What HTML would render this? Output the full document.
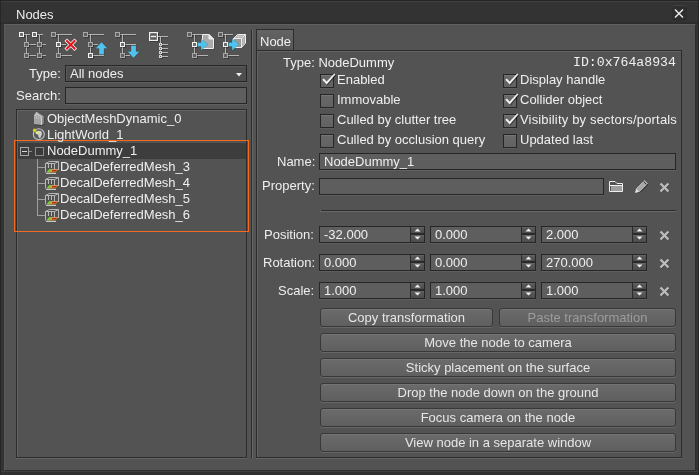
<!DOCTYPE html>
<html><head><meta charset="utf-8">
<style>
*{box-sizing:border-box;margin:0;padding:0}
html,body{width:699px;height:475px;overflow:hidden;background:#262626}
body{position:relative;font-family:"Liberation Sans",sans-serif;font-size:13px;color:#efefef}
.a{position:absolute}
.t{position:absolute;line-height:15px;white-space:pre;will-change:transform}
#win{left:0;top:0;width:699px;height:475px;background:#333;border:1px solid #262626;border-top-color:#242424;border-radius:3px 3px 0 0;box-shadow:inset 0 1px 0 #3e3e3e}
#title{left:1px;top:1px;width:697px;height:23px;background:#333;border-top:1px solid #3f3f3f;border-bottom:2px solid #2d2d2d}
#panel{left:4px;top:24px;width:692px;height:447px;background:#535353;border-top:1px solid #606060;border-left:1px solid #5a5a5a;border-right:1px solid #2c2c2c;border-bottom:1px solid #2c2c2c}
.frame{position:absolute;border:1px solid #2c2c2c;box-shadow:inset 1px 1px 0 #646464,0 1px 0 #646464}
.field{position:absolute;border:1px solid #262626;background:#5e5e5e;box-shadow:0 1px 0 #606060}
.cb{position:absolute;width:14px;height:14px;border:1px solid #262626;background:linear-gradient(#686868,#626262);box-shadow:inset 0 1px 0 #767676,0 1px 0 #5c5c5c}
.btn{position:absolute;border:1px solid #383838;border-radius:3px;background:linear-gradient(#6b6b6b,#5f5f5f);box-shadow:inset 0 1px 0 #747474,0 1px 0 #676767;text-align:center;line-height:17px;color:#e6e6e6}
.spin{position:absolute;width:106px;height:17px;border:1px solid #262626;background:#5e5e5e;box-shadow:0 1px 0 #5e5e5e}
.spin .up,.spin .dn{position:absolute;left:90px;width:14px;background:linear-gradient(#5c5c5c,#4c4c4c);border-left:1px solid #2a2a2a;box-shadow:inset 0 1px 0 #626262}
.spin .up{top:0;height:8px;border-bottom:2px solid #2a2a2a}
.spin .dn{top:8px;height:7px}
.spin span{position:absolute;left:4px;top:0px;line-height:15px;will-change:transform}
.xic{position:absolute}
</style></head><body>
<div id="win" class="a"></div>
<div id="title" class="a"></div>
<div class="t" style="left:16px;top:7px;color:#ececec">Nodes</div>
<!-- close button -->
<div class="a" style="left:672px;top:5px;width:15px;height:16px;border-radius:3px;background:#2e2e2e;box-shadow:inset 0 1px 0 #404040"></div>
<svg class="a" style="left:672px;top:5px" width="15" height="16"><path d="M3 4.5 L11 12.5 M11 4.5 L3 12.5" stroke="#e8e8e8" stroke-width="1.5"/></svg>

<div id="panel" class="a"></div>
<div id="bot" class="a" style="left:1px;top:471px;width:697px;height:4px;background:#303030;border-top:1px solid #3f3f3f"></div>

<!-- left panel -->
<div class="t" style="left:29px;top:66px">Type:</div>
<div class="a" style="left:65px;top:65px;width:182px;height:17px;border:1px solid #262626;background:#4d4d4d;box-shadow:inset 1px 1px 0 #5a5a5a,0 1px 0 #5e5e5e"></div>
<div class="t" style="left:70px;top:66px">All nodes</div>
<svg class="a" style="left:236px;top:73px" width="6" height="4"><path d="M0 0 H6 L3 3.5 Z" fill="#f0f0f0"/></svg>
<div class="t" style="left:16px;top:88px">Search:</div>
<div class="field" style="left:65px;top:87px;width:182px;height:17px"></div>

<div class="frame" style="left:16px;top:109px;width:231px;height:349px"></div>
<!-- selection row -->
<div class="a" style="left:18px;top:143px;width:228px;height:16px;background:#3d3d3d"></div>
<div class="a" style="left:14px;top:140px;width:235px;height:92px;border:1px solid #f46a20"></div>

<div class="t" style="left:47px;top:111px">ObjectMeshDynamic_0</div>
<div class="t" style="left:47px;top:127px">LightWorld_1</div>
<div class="t" style="left:47px;top:143px">NodeDummy_1</div>
<div class="t" style="left:60px;top:159px">DecalDeferredMesh_3</div>
<div class="t" style="left:60px;top:175px">DecalDeferredMesh_4</div>
<div class="t" style="left:60px;top:191px">DecalDeferredMesh_5</div>
<div class="t" style="left:60px;top:207px">DecalDeferredMesh_6</div>

<!-- splitter -->
<div class="a" style="left:251px;top:30px;width:1px;height:428px;background:#2e2e2e"></div>
<div class="a" style="left:252px;top:30px;width:1px;height:428px;background:#666"></div>

<!-- right panel -->
<div class="a" style="left:256px;top:29px;width:38px;height:22px;border:1px solid #2c2c2c;border-bottom:none;background:linear-gradient(#646464,#555)"></div>
<div class="t" style="left:260px;top:34px">Node</div>
<div class="frame" style="left:256px;top:50px;width:426px;height:408px"></div>

<div class="t" style="left:283px;top:55px">Type: NodeDummy</div>
<div class="t" style="left:573px;top:55px;font-family:'Liberation Mono',monospace;font-size:13.2px">ID:0x764a8934</div>

<div class="cb" style="left:320px;top:74px"></div>
<div class="cb" style="left:320px;top:94px"></div>
<div class="cb" style="left:320px;top:114px"></div>
<div class="cb" style="left:320px;top:134px"></div>
<div class="t" style="left:337px;top:72px">Enabled</div>
<div class="t" style="left:337px;top:92px">Immovable</div>
<div class="t" style="left:337px;top:112px">Culled by clutter tree</div>
<div class="t" style="left:337px;top:132px">Culled by occlusion query</div>
<div class="cb" style="left:503px;top:74px"></div>
<div class="cb" style="left:503px;top:94px"></div>
<div class="cb" style="left:503px;top:114px"></div>
<div class="cb" style="left:503px;top:134px"></div>
<div class="t" style="left:520px;top:72px">Display handle</div>
<div class="t" style="left:520px;top:92px">Collider object</div>
<div class="t" style="left:520px;top:112px;letter-spacing:0.165px">Visibility by sectors/portals</div>
<div class="t" style="left:520px;top:132px">Updated last</div>

<div class="t" style="left:277px;top:154px">Name:</div>
<div class="field" style="left:319px;top:153px;width:357px;height:17px"></div>
<div class="t" style="left:324px;top:154px">NodeDummy_1</div>
<div class="t" style="left:262px;top:178px">Property:</div>
<div class="field" style="left:319px;top:178px;width:285px;height:17px"></div>
<div class="a" style="left:320px;top:210px;width:356px;height:1px;background:#2c2c2c;border-left:1px solid #686868;box-shadow:0 1px 0 #686868"></div>

<div class="t" style="left:264px;top:227px">Position:</div>
<div class="t" style="left:263px;top:255px">Rotation:</div>
<div class="t" style="left:278px;top:283px">Scale:</div>

<div class="spin" style="left:319px;top:226px"><span>-32.000</span><div class="up"></div><div class="dn"></div></div>
<div class="spin" style="left:430px;top:226px"><span>0.000</span><div class="up"></div><div class="dn"></div></div>
<div class="spin" style="left:541px;top:226px"><span>2.000</span><div class="up"></div><div class="dn"></div></div>
<div class="spin" style="left:319px;top:254px"><span>0.000</span><div class="up"></div><div class="dn"></div></div>
<div class="spin" style="left:430px;top:254px"><span>0.000</span><div class="up"></div><div class="dn"></div></div>
<div class="spin" style="left:541px;top:254px"><span>270.000</span><div class="up"></div><div class="dn"></div></div>
<div class="spin" style="left:319px;top:282px"><span>1.000</span><div class="up"></div><div class="dn"></div></div>
<div class="spin" style="left:430px;top:282px"><span>1.000</span><div class="up"></div><div class="dn"></div></div>
<div class="spin" style="left:541px;top:282px"><span>1.000</span><div class="up"></div><div class="dn"></div></div>

<div class="btn" style="left:320px;top:308px;width:173px;height:19px">Copy transformation</div>
<div class="btn" style="left:499px;top:308px;width:177px;height:19px;color:#9c9c9c">Paste transformation</div>
<div class="btn" style="left:320px;top:333px;width:356px;height:19px">Move the node to camera</div>
<div class="btn" style="left:320px;top:358px;width:356px;height:19px">Sticky placement on the surface</div>
<div class="btn" style="left:320px;top:383px;width:356px;height:19px">Drop the node down on the ground</div>
<div class="btn" style="left:320px;top:408px;width:356px;height:19px">Focus camera on the node</div>
<div class="btn" style="left:320px;top:433px;width:356px;height:19px">View node in a separate window</div>

<!--ICONS-->
<svg class="a" style="left:0;top:0" width="699" height="475">
<rect shape-rendering="crispEdges" x="24" y="35" width="6" height="1" fill="rgba(0,0,0,0.18)"/>
<rect shape-rendering="crispEdges" x="24" y="34" width="6" height="1" fill="#b4b4b4"/>
<rect shape-rendering="crispEdges" x="27" y="35" width="1" height="18" fill="rgba(0,0,0,0.18)"/>
<rect shape-rendering="crispEdges" x="26" y="35" width="1" height="18" fill="#b4b4b4"/>
<rect shape-rendering="crispEdges" x="29" y="45" width="7" height="1" fill="rgba(0,0,0,0.18)"/>
<rect shape-rendering="crispEdges" x="29" y="44" width="7" height="1" fill="#b4b4b4"/>
<rect shape-rendering="crispEdges" x="29" y="56" width="7" height="1" fill="rgba(0,0,0,0.18)"/>
<rect shape-rendering="crispEdges" x="29" y="55" width="7" height="1" fill="#b4b4b4"/>
<rect shape-rendering="crispEdges" x="20" y="33" width="5" height="5" fill="rgba(0,0,0,0.28)"/>
<rect shape-rendering="crispEdges" x="19.5" y="32.5" width="4" height="4" fill="#6e6e6e" stroke="#f2f2f2" stroke-width="1"/>
<rect shape-rendering="crispEdges" x="25" y="43" width="5" height="5" fill="rgba(0,0,0,0.28)"/>
<rect shape-rendering="crispEdges" x="24.5" y="42.5" width="4" height="4" fill="#5e5e5e" stroke="#a8a8a8" stroke-width="1"/>
<rect shape-rendering="crispEdges" x="25" y="54" width="5" height="5" fill="rgba(0,0,0,0.28)"/>
<rect shape-rendering="crispEdges" x="24.5" y="53.5" width="4" height="4" fill="#5e5e5e" stroke="#a8a8a8" stroke-width="1"/>
<rect shape-rendering="crispEdges" x="37" y="35" width="6" height="1" fill="rgba(0,0,0,0.18)"/>
<rect shape-rendering="crispEdges" x="37" y="34" width="6" height="1" fill="#b4b4b4"/>
<rect shape-rendering="crispEdges" x="40" y="35" width="1" height="18" fill="rgba(0,0,0,0.18)"/>
<rect shape-rendering="crispEdges" x="39" y="35" width="1" height="18" fill="#b4b4b4"/>
<rect shape-rendering="crispEdges" x="42" y="45" width="4" height="1" fill="rgba(0,0,0,0.18)"/>
<rect shape-rendering="crispEdges" x="42" y="44" width="4" height="1" fill="#b4b4b4"/>
<rect shape-rendering="crispEdges" x="42" y="56" width="4" height="1" fill="rgba(0,0,0,0.18)"/>
<rect shape-rendering="crispEdges" x="42" y="55" width="4" height="1" fill="#b4b4b4"/>
<rect shape-rendering="crispEdges" x="33" y="33" width="5" height="5" fill="rgba(0,0,0,0.28)"/>
<rect shape-rendering="crispEdges" x="32.5" y="32.5" width="4" height="4" fill="#6e6e6e" stroke="#f2f2f2" stroke-width="1"/>
<rect shape-rendering="crispEdges" x="38" y="43" width="5" height="5" fill="rgba(0,0,0,0.28)"/>
<rect shape-rendering="crispEdges" x="37.5" y="42.5" width="4" height="4" fill="#5e5e5e" stroke="#a8a8a8" stroke-width="1"/>
<rect shape-rendering="crispEdges" x="38" y="54" width="5" height="5" fill="rgba(0,0,0,0.28)"/>
<rect shape-rendering="crispEdges" x="37.5" y="53.5" width="4" height="4" fill="#5e5e5e" stroke="#a8a8a8" stroke-width="1"/>
<rect shape-rendering="crispEdges" x="56" y="35" width="16" height="1" fill="rgba(0,0,0,0.18)"/>
<rect shape-rendering="crispEdges" x="56" y="34" width="16" height="1" fill="#b4b4b4"/>
<rect shape-rendering="crispEdges" x="59" y="35" width="1" height="18" fill="rgba(0,0,0,0.18)"/>
<rect shape-rendering="crispEdges" x="58" y="35" width="1" height="18" fill="#b4b4b4"/>
<rect shape-rendering="crispEdges" x="61" y="45" width="5" height="1" fill="rgba(0,0,0,0.18)"/>
<rect shape-rendering="crispEdges" x="61" y="44" width="5" height="1" fill="#b4b4b4"/>
<rect shape-rendering="crispEdges" x="61" y="56" width="11" height="1" fill="rgba(0,0,0,0.18)"/>
<rect shape-rendering="crispEdges" x="61" y="55" width="11" height="1" fill="#b4b4b4"/>
<rect shape-rendering="crispEdges" x="52" y="33" width="5" height="5" fill="rgba(0,0,0,0.28)"/>
<rect shape-rendering="crispEdges" x="51.5" y="32.5" width="4" height="4" fill="#5e5e5e" stroke="#a8a8a8" stroke-width="1"/>
<rect shape-rendering="crispEdges" x="57" y="43" width="5" height="5" fill="rgba(0,0,0,0.28)"/>
<rect shape-rendering="crispEdges" x="56.5" y="42.5" width="4" height="4" fill="#6e6e6e" stroke="#f2f2f2" stroke-width="1"/>
<rect shape-rendering="crispEdges" x="57" y="54" width="5" height="5" fill="rgba(0,0,0,0.28)"/>
<rect shape-rendering="crispEdges" x="56.5" y="53.5" width="4" height="4" fill="#5e5e5e" stroke="#a8a8a8" stroke-width="1"/>
<rect shape-rendering="crispEdges" x="88" y="35" width="16" height="1" fill="rgba(0,0,0,0.18)"/>
<rect shape-rendering="crispEdges" x="88" y="34" width="16" height="1" fill="#b4b4b4"/>
<rect shape-rendering="crispEdges" x="91" y="35" width="1" height="18" fill="rgba(0,0,0,0.18)"/>
<rect shape-rendering="crispEdges" x="90" y="35" width="1" height="18" fill="#b4b4b4"/>
<rect shape-rendering="crispEdges" x="93" y="45" width="5" height="1" fill="rgba(0,0,0,0.18)"/>
<rect shape-rendering="crispEdges" x="93" y="44" width="5" height="1" fill="#b4b4b4"/>
<rect shape-rendering="crispEdges" x="93" y="56" width="11" height="1" fill="rgba(0,0,0,0.18)"/>
<rect shape-rendering="crispEdges" x="93" y="55" width="11" height="1" fill="#b4b4b4"/>
<rect shape-rendering="crispEdges" x="84" y="33" width="5" height="5" fill="rgba(0,0,0,0.28)"/>
<rect shape-rendering="crispEdges" x="83.5" y="32.5" width="4" height="4" fill="#5e5e5e" stroke="#a8a8a8" stroke-width="1"/>
<rect shape-rendering="crispEdges" x="89" y="43" width="5" height="5" fill="rgba(0,0,0,0.28)"/>
<rect shape-rendering="crispEdges" x="88.5" y="42.5" width="4" height="4" fill="#5e5e5e" stroke="#a8a8a8" stroke-width="1"/>
<rect shape-rendering="crispEdges" x="89" y="54" width="5" height="5" fill="rgba(0,0,0,0.28)"/>
<rect shape-rendering="crispEdges" x="88.5" y="53.5" width="4" height="4" fill="#6e6e6e" stroke="#f2f2f2" stroke-width="1"/>
<rect shape-rendering="crispEdges" x="120" y="35" width="16" height="1" fill="rgba(0,0,0,0.18)"/>
<rect shape-rendering="crispEdges" x="120" y="34" width="16" height="1" fill="#b4b4b4"/>
<rect shape-rendering="crispEdges" x="123" y="35" width="1" height="18" fill="rgba(0,0,0,0.18)"/>
<rect shape-rendering="crispEdges" x="122" y="35" width="1" height="18" fill="#b4b4b4"/>
<rect shape-rendering="crispEdges" x="125" y="45" width="11" height="1" fill="rgba(0,0,0,0.18)"/>
<rect shape-rendering="crispEdges" x="125" y="44" width="11" height="1" fill="#b4b4b4"/>
<rect shape-rendering="crispEdges" x="125" y="56" width="5" height="1" fill="rgba(0,0,0,0.18)"/>
<rect shape-rendering="crispEdges" x="125" y="55" width="5" height="1" fill="#b4b4b4"/>
<rect shape-rendering="crispEdges" x="116" y="33" width="5" height="5" fill="rgba(0,0,0,0.28)"/>
<rect shape-rendering="crispEdges" x="115.5" y="32.5" width="4" height="4" fill="#5e5e5e" stroke="#a8a8a8" stroke-width="1"/>
<rect shape-rendering="crispEdges" x="121" y="43" width="5" height="5" fill="rgba(0,0,0,0.28)"/>
<rect shape-rendering="crispEdges" x="120.5" y="42.5" width="4" height="4" fill="#6e6e6e" stroke="#f2f2f2" stroke-width="1"/>
<rect shape-rendering="crispEdges" x="121" y="54" width="5" height="5" fill="rgba(0,0,0,0.28)"/>
<rect shape-rendering="crispEdges" x="120.5" y="53.5" width="4" height="4" fill="#5e5e5e" stroke="#a8a8a8" stroke-width="1"/>
<path d="M67 41 L74.5 48.5 M74.5 41 L67 48.5" stroke="#f4f4f4" stroke-width="3.6" stroke-linecap="square"/>
<path d="M67 41 L74.5 48.5 M74.5 41 L67 48.5" stroke="#e0141c" stroke-width="2" stroke-linecap="square"/>
<path d="M101.5 42 L107.5 48.5 L104 48.5 L104 54.5 L99 54.5 L99 48.5 L95.5 48.5 Z" fill="#4fc3ee" stroke="rgba(0,0,0,0.25)" stroke-width="0.6"/>
<path d="M133.5 58 L139.5 51.5 L136 51.5 L136 45.5 L131 45.5 L131 51.5 L127.5 51.5 Z" fill="#4fc3ee" stroke="rgba(0,0,0,0.25)" stroke-width="0.6"/>
<rect shape-rendering="crispEdges" x="150" y="33" width="9" height="9" fill="rgba(0,0,0,0.3)"/>
<rect x="149.6" y="32.6" width="7.8" height="7.8" fill="#5c5c5c" stroke="#f0f0f0" stroke-width="1.2"/>
<rect shape-rendering="crispEdges" x="151" y="36" width="5" height="1" fill="#f0f0f0"/>
<rect x="151" y="35.8" width="5" height="1.4" fill="#f0f0f0"/>
<rect shape-rendering="crispEdges" x="158" y="37" width="10" height="1" fill="rgba(0,0,0,0.18)"/>
<rect shape-rendering="crispEdges" x="158" y="36" width="10" height="1" fill="#b4b4b4"/>
<rect shape-rendering="crispEdges" x="161" y="37" width="1" height="20" fill="rgba(0,0,0,0.18)"/>
<rect shape-rendering="crispEdges" x="160" y="37" width="1" height="20" fill="#b4b4b4"/>
<rect shape-rendering="crispEdges" x="160" y="44" width="3" height="3" fill="rgba(0,0,0,0.25)"/>
<rect shape-rendering="crispEdges" x="159" y="43" width="3" height="3" fill="#d4d4d4"/>
<rect shape-rendering="crispEdges" x="160" y="44" width="1" height="1" fill="#5a5a5a"/>
<rect shape-rendering="crispEdges" x="162" y="45" width="6" height="1" fill="rgba(0,0,0,0.18)"/>
<rect shape-rendering="crispEdges" x="162" y="44" width="6" height="1" fill="#b4b4b4"/>
<rect shape-rendering="crispEdges" x="160" y="48" width="3" height="3" fill="rgba(0,0,0,0.25)"/>
<rect shape-rendering="crispEdges" x="159" y="47" width="3" height="3" fill="#d4d4d4"/>
<rect shape-rendering="crispEdges" x="160" y="48" width="1" height="1" fill="#5a5a5a"/>
<rect shape-rendering="crispEdges" x="162" y="49" width="6" height="1" fill="rgba(0,0,0,0.18)"/>
<rect shape-rendering="crispEdges" x="162" y="48" width="6" height="1" fill="#b4b4b4"/>
<rect shape-rendering="crispEdges" x="160" y="52" width="3" height="3" fill="rgba(0,0,0,0.25)"/>
<rect shape-rendering="crispEdges" x="159" y="51" width="3" height="3" fill="#d4d4d4"/>
<rect shape-rendering="crispEdges" x="160" y="52" width="1" height="1" fill="#5a5a5a"/>
<rect shape-rendering="crispEdges" x="162" y="53" width="6" height="1" fill="rgba(0,0,0,0.18)"/>
<rect shape-rendering="crispEdges" x="162" y="52" width="6" height="1" fill="#b4b4b4"/>
<rect shape-rendering="crispEdges" x="160" y="56" width="3" height="3" fill="rgba(0,0,0,0.25)"/>
<rect shape-rendering="crispEdges" x="159" y="55" width="3" height="3" fill="#d4d4d4"/>
<rect shape-rendering="crispEdges" x="160" y="56" width="1" height="1" fill="#5a5a5a"/>
<rect shape-rendering="crispEdges" x="162" y="57" width="6" height="1" fill="rgba(0,0,0,0.18)"/>
<rect shape-rendering="crispEdges" x="162" y="56" width="6" height="1" fill="#b4b4b4"/>
<rect shape-rendering="crispEdges" x="192" y="35" width="10" height="1" fill="rgba(0,0,0,0.18)"/>
<rect shape-rendering="crispEdges" x="192" y="34" width="10" height="1" fill="#b4b4b4"/>
<rect shape-rendering="crispEdges" x="195" y="35" width="1" height="18" fill="rgba(0,0,0,0.18)"/>
<rect shape-rendering="crispEdges" x="194" y="35" width="1" height="18" fill="#b4b4b4"/>
<rect shape-rendering="crispEdges" x="197" y="56" width="11" height="1" fill="rgba(0,0,0,0.18)"/>
<rect shape-rendering="crispEdges" x="197" y="55" width="11" height="1" fill="#b4b4b4"/>
<rect shape-rendering="crispEdges" x="188" y="33" width="5" height="5" fill="rgba(0,0,0,0.28)"/>
<rect shape-rendering="crispEdges" x="187.5" y="32.5" width="4" height="4" fill="#5e5e5e" stroke="#a8a8a8" stroke-width="1"/>
<rect shape-rendering="crispEdges" x="193" y="43" width="5" height="5" fill="rgba(0,0,0,0.28)"/>
<rect shape-rendering="crispEdges" x="192.5" y="42.5" width="4" height="4" fill="#6e6e6e" stroke="#f2f2f2" stroke-width="1"/>
<rect shape-rendering="crispEdges" x="193" y="54" width="5" height="5" fill="rgba(0,0,0,0.28)"/>
<rect shape-rendering="crispEdges" x="192.5" y="53.5" width="4" height="4" fill="#5e5e5e" stroke="#a8a8a8" stroke-width="1"/>
<path d="M203.5 35.5 H210 L214.5 40 V49.5 H203.5 Z" fill="rgba(0,0,0,0.3)"/>
<path d="M202.5 34.5 H209 L213.5 39 V48.5 H202.5 Z" fill="#ababab" stroke="#f0f0f0" stroke-width="1"/>
<path d="M209 34.5 V39 H213.5 Z" fill="#e6e6e6" stroke="#f0f0f0" stroke-width="1"/>
<path d="M197.5 42.5 H201 V38.5 L208 44.5 L201 50.5 V46.5 H197.5 Z" fill="#4fc3ee" stroke="rgba(0,0,0,0.2)" stroke-width="0.6"/>
<rect shape-rendering="crispEdges" x="223" y="35" width="10" height="1" fill="rgba(0,0,0,0.18)"/>
<rect shape-rendering="crispEdges" x="223" y="34" width="10" height="1" fill="#b4b4b4"/>
<rect shape-rendering="crispEdges" x="226" y="35" width="1" height="18" fill="rgba(0,0,0,0.18)"/>
<rect shape-rendering="crispEdges" x="225" y="35" width="1" height="18" fill="#b4b4b4"/>
<rect shape-rendering="crispEdges" x="228" y="56" width="11" height="1" fill="rgba(0,0,0,0.18)"/>
<rect shape-rendering="crispEdges" x="228" y="55" width="11" height="1" fill="#b4b4b4"/>
<rect shape-rendering="crispEdges" x="219" y="33" width="5" height="5" fill="rgba(0,0,0,0.28)"/>
<rect shape-rendering="crispEdges" x="218.5" y="32.5" width="4" height="4" fill="#5e5e5e" stroke="#a8a8a8" stroke-width="1"/>
<rect shape-rendering="crispEdges" x="224" y="43" width="5" height="5" fill="rgba(0,0,0,0.28)"/>
<rect shape-rendering="crispEdges" x="223.5" y="42.5" width="4" height="4" fill="#6e6e6e" stroke="#f2f2f2" stroke-width="1"/>
<rect shape-rendering="crispEdges" x="224" y="54" width="5" height="5" fill="rgba(0,0,0,0.28)"/>
<rect shape-rendering="crispEdges" x="223.5" y="53.5" width="4" height="4" fill="#5e5e5e" stroke="#a8a8a8" stroke-width="1"/>
<path d="M233.5 38.5 L237.5 34.5 H245.5 V43 L241.5 47.5 H233.5 Z" fill="#9a9a9a" stroke="#eeeeee" stroke-width="1"/>
<path d="M233.5 38.5 H241.5 V47.5 M241.5 38.5 L245.5 34.5" fill="none" stroke="#eeeeee" stroke-width="1"/>
<path d="M234.5 37.5 L237.5 35.5 H244 L241 37.5 Z" fill="#cfcfcf"/>
<path d="M242.5 38.5 L244.5 36.5 V43 L242.5 45.5 Z" fill="#bdbdbd"/>
<path d="M228.5 42.5 H232 V38.5 L239 44.5 L232 50.5 V46.5 H228.5 Z" fill="#4fc3ee" stroke="rgba(0,0,0,0.2)" stroke-width="0.6"/>
<path d="M34.5 125 L42 126 L44.5 124.5 V117.5 Z" fill="rgba(0,0,0,0.25)"/>
<path d="M34 115.5 L36.5 112 L43.5 116.5 L43.5 123.5 L41.5 125 L34 124 Z" fill="#a4a4a4"/>
<path d="M34 115.5 L36.5 112 L43.5 116.5 L41.5 118 Z" fill="#cdcdcd"/>
<path d="M35.5 114.5 L41.5 117.8 M37 113 L42.8 116.6" stroke="#8a8a8a" stroke-width="0.7"/>
<path d="M41.5 118 L43.5 116.5 L43.5 123.5 L41.5 125 Z" fill="#8c8c8c"/>
<path d="M41.5 118 V125" stroke="#e0e0e0" stroke-width="0.8"/>
<path d="M34 118 H41" stroke="#d8d8d8" stroke-width="0.8" stroke-dasharray="1 1"/>
<circle cx="38.8" cy="134.2" r="5.5" fill="#5c5c5c" stroke="#c4c4c4" stroke-width="1.1"/>
<path d="M36 131.5 Q39 130 41.5 131.5 L42 134 L40 138.5 L38.5 137 L38 134 L35.5 133.5 Z" fill="#cfcfcf"/>
<circle cx="34.6" cy="130.2" r="1.7" fill="#d8d020"/>
<path d="M35.5 132.5 Q37.5 130.8 39.5 131.8 L38.5 134.5 L36 134 Z" fill="#e0e49a"/>
<rect shape-rendering="crispEdges" x="20.5" y="147.5" width="8" height="8" fill="none" stroke="#a8a8a8"/>
<rect shape-rendering="crispEdges" x="22" y="151" width="5" height="1" fill="#d8d8d8"/>
<rect shape-rendering="crispEdges" x="29" y="151" width="3" height="1" fill="#8a8a8a"/>
<rect shape-rendering="crispEdges" x="35.5" y="147.5" width="8" height="8" fill="#3a3a3a" stroke="#8c8c8c"/>
<rect shape-rendering="crispEdges" x="37" y="159" width="1" height="57" fill="#a0a0a0"/>
<rect shape-rendering="crispEdges" x="38" y="167" width="7" height="1" fill="#a0a0a0"/>
<path d="M45.5 163.5 L49.5 161.5 H58.5 L54.5 163.5 Z M45.5 163.5 V172.5 M54.5 163.5 V169 M58.5 161.5 V170 M48.5 163.5 V168 M51.5 163.5 V168" fill="none" stroke="#b8b8b8" stroke-width="1"/>
<path d="M46.5 172.5 L49.5 169 H58.5 L55.5 172.5 Z" fill="#d89a50"/>
<path d="M46.5 172.5 L49.5 169 H52 L49.5 172.5 Z" fill="#70d030"/>
<path d="M52.5 170 H57 L56 171.5 H51.5 Z" fill="#b02a10"/>
<rect shape-rendering="crispEdges" x="46" y="173" width="10" height="1" fill="#c8c8c8"/>
<rect shape-rendering="crispEdges" x="38" y="183" width="7" height="1" fill="#a0a0a0"/>
<path d="M45.5 179.5 L49.5 177.5 H58.5 L54.5 179.5 Z M45.5 179.5 V188.5 M54.5 179.5 V185 M58.5 177.5 V186 M48.5 179.5 V184 M51.5 179.5 V184" fill="none" stroke="#b8b8b8" stroke-width="1"/>
<path d="M46.5 188.5 L49.5 185 H58.5 L55.5 188.5 Z" fill="#d89a50"/>
<path d="M46.5 188.5 L49.5 185 H52 L49.5 188.5 Z" fill="#70d030"/>
<path d="M52.5 186 H57 L56 187.5 H51.5 Z" fill="#b02a10"/>
<rect shape-rendering="crispEdges" x="46" y="189" width="10" height="1" fill="#c8c8c8"/>
<rect shape-rendering="crispEdges" x="38" y="199" width="7" height="1" fill="#a0a0a0"/>
<path d="M45.5 195.5 L49.5 193.5 H58.5 L54.5 195.5 Z M45.5 195.5 V204.5 M54.5 195.5 V201 M58.5 193.5 V202 M48.5 195.5 V200 M51.5 195.5 V200" fill="none" stroke="#b8b8b8" stroke-width="1"/>
<path d="M46.5 204.5 L49.5 201 H58.5 L55.5 204.5 Z" fill="#d89a50"/>
<path d="M46.5 204.5 L49.5 201 H52 L49.5 204.5 Z" fill="#70d030"/>
<path d="M52.5 202 H57 L56 203.5 H51.5 Z" fill="#b02a10"/>
<rect shape-rendering="crispEdges" x="46" y="205" width="10" height="1" fill="#c8c8c8"/>
<rect shape-rendering="crispEdges" x="38" y="215" width="7" height="1" fill="#a0a0a0"/>
<path d="M45.5 211.5 L49.5 209.5 H58.5 L54.5 211.5 Z M45.5 211.5 V220.5 M54.5 211.5 V217 M58.5 209.5 V218 M48.5 211.5 V216 M51.5 211.5 V216" fill="none" stroke="#b8b8b8" stroke-width="1"/>
<path d="M46.5 220.5 L49.5 217 H58.5 L55.5 220.5 Z" fill="#d89a50"/>
<path d="M46.5 220.5 L49.5 217 H52 L49.5 220.5 Z" fill="#70d030"/>
<path d="M52.5 218 H57 L56 219.5 H51.5 Z" fill="#b02a10"/>
<rect shape-rendering="crispEdges" x="46" y="221" width="10" height="1" fill="#c8c8c8"/>
<path d="M323.20 80.70 L324.80 79.40 L327.50 82.30 L335.20 74.50 L336.20 75.50 L327.60 85.50 Z" fill="rgba(0,0,0,0.4)"/>
<path d="M322.30 79.80 L323.90 78.50 L326.60 81.40 L334.30 73.60 L335.30 74.60 L326.70 84.60 Z" fill="#f2f2f2"/>
<path d="M506.20 80.70 L507.80 79.40 L510.50 82.30 L518.20 74.50 L519.20 75.50 L510.60 85.50 Z" fill="rgba(0,0,0,0.4)"/>
<path d="M505.30 79.80 L506.90 78.50 L509.60 81.40 L517.30 73.60 L518.30 74.60 L509.70 84.60 Z" fill="#f2f2f2"/>
<path d="M506.20 100.70 L507.80 99.40 L510.50 102.30 L518.20 94.50 L519.20 95.50 L510.60 105.50 Z" fill="rgba(0,0,0,0.4)"/>
<path d="M505.30 99.80 L506.90 98.50 L509.60 101.40 L517.30 93.60 L518.30 94.60 L509.70 104.60 Z" fill="#f2f2f2"/>
<path d="M506.20 120.70 L507.80 119.40 L510.50 122.30 L518.20 114.50 L519.20 115.50 L510.60 125.50 Z" fill="rgba(0,0,0,0.4)"/>
<path d="M505.30 119.80 L506.90 118.50 L509.60 121.40 L517.30 113.60 L518.30 114.60 L509.70 124.60 Z" fill="#f2f2f2"/>
<path d="M414.5 231.5 L417.5 228.5 L420.5 231.5 Z" fill="#f0f0f0"/>
<path d="M414.5 236.5 L417.5 239.5 L420.5 236.5 Z" fill="#f0f0f0"/>
<path d="M414.5 259.5 L417.5 256.5 L420.5 259.5 Z" fill="#f0f0f0"/>
<path d="M414.5 264.5 L417.5 267.5 L420.5 264.5 Z" fill="#f0f0f0"/>
<path d="M414.5 287.5 L417.5 284.5 L420.5 287.5 Z" fill="#f0f0f0"/>
<path d="M414.5 292.5 L417.5 295.5 L420.5 292.5 Z" fill="#f0f0f0"/>
<path d="M525.5 231.5 L528.5 228.5 L531.5 231.5 Z" fill="#f0f0f0"/>
<path d="M525.5 236.5 L528.5 239.5 L531.5 236.5 Z" fill="#f0f0f0"/>
<path d="M525.5 259.5 L528.5 256.5 L531.5 259.5 Z" fill="#f0f0f0"/>
<path d="M525.5 264.5 L528.5 267.5 L531.5 264.5 Z" fill="#f0f0f0"/>
<path d="M525.5 287.5 L528.5 284.5 L531.5 287.5 Z" fill="#f0f0f0"/>
<path d="M525.5 292.5 L528.5 295.5 L531.5 292.5 Z" fill="#f0f0f0"/>
<path d="M636.5 231.5 L639.5 228.5 L642.5 231.5 Z" fill="#f0f0f0"/>
<path d="M636.5 236.5 L639.5 239.5 L642.5 236.5 Z" fill="#f0f0f0"/>
<path d="M636.5 259.5 L639.5 256.5 L642.5 259.5 Z" fill="#f0f0f0"/>
<path d="M636.5 264.5 L639.5 267.5 L642.5 264.5 Z" fill="#f0f0f0"/>
<path d="M636.5 287.5 L639.5 284.5 L642.5 287.5 Z" fill="#f0f0f0"/>
<path d="M636.5 292.5 L639.5 295.5 L642.5 292.5 Z" fill="#f0f0f0"/>
<path d="M661 184 L669 192 M669 184 L661 192" stroke="rgba(0,0,0,0.35)" stroke-width="2.4"/>
<path d="M660.5 183.5 L668.5 191.5 M668.5 183.5 L660.5 191.5" stroke="#bdbdbd" stroke-width="2.4"/>
<path d="M661 232 L669 240 M669 232 L661 240" stroke="rgba(0,0,0,0.35)" stroke-width="2.4"/>
<path d="M660.5 231.5 L668.5 239.5 M668.5 231.5 L660.5 239.5" stroke="#bdbdbd" stroke-width="2.4"/>
<path d="M661 260 L669 268 M669 260 L661 268" stroke="rgba(0,0,0,0.35)" stroke-width="2.4"/>
<path d="M660.5 259.5 L668.5 267.5 M668.5 259.5 L660.5 267.5" stroke="#bdbdbd" stroke-width="2.4"/>
<path d="M661 288 L669 296 M669 288 L661 296" stroke="rgba(0,0,0,0.35)" stroke-width="2.4"/>
<path d="M660.5 287.5 L668.5 295.5 M668.5 287.5 L660.5 295.5" stroke="#bdbdbd" stroke-width="2.4"/>
<path d="M609.5 191.5 V181.5 H615 L617 183.5 H622.5 V191.5 Z" fill="none" stroke="#eeeeee" stroke-width="1"/>
<rect shape-rendering="crispEdges" x="610" y="185" width="12" height="1" fill="#eeeeee"/>
<rect shape-rendering="crispEdges" x="611" y="186" width="11" height="5" fill="#9e9e9e"/>
<path d="M636.5 193.5 L637.5 189.5 L645.5 181.5 L648.5 184.5 L640.5 192.5 Z" fill="rgba(0,0,0,0.3)"/>
<path d="M635.5 192.5 L636.5 188.5 L644.5 180.5 L647.5 183.5 L639.5 191.5 Z" fill="#a8a8a8" stroke="#cfcfcf" stroke-width="0.7"/>
<path d="M643.6 181.6 L646.4 184.4" stroke="#2e2e2e" stroke-width="1"/>
<path d="M635.5 192.5 L636.3 189 L639 191.7 Z" fill="#e4e4e4"/>
</svg>
<!--/ICONS-->
</body></html>
